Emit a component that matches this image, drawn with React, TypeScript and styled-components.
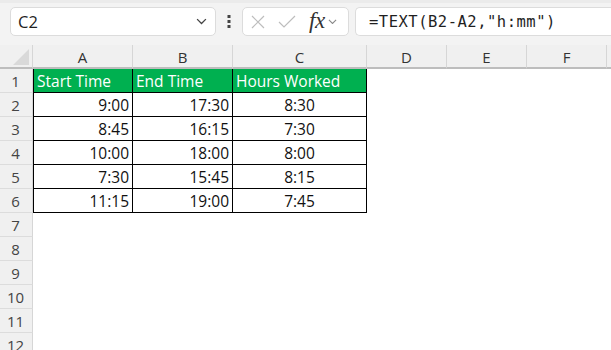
import styled, {createGlobalStyle} from 'styled-components';

const Global = createGlobalStyle`
  html, body {
    margin: 0;
    padding: 0;
    background: #ffffff;
  }
  body {
    width: 611px;
    height: 350px;
    overflow: hidden;
    font-family: "Open Sans", "Liberation Sans", sans-serif;
  }
`;

const Page = styled.div`
  width: 611px;
  height: 350px;
  overflow: hidden;
  background: #fff;
`;

const Toolbar = styled.div`
  display: flex;
  align-items: center;
  box-sizing: border-box;
  height: 45px;
  padding: 4px 0 1px 10px;
  background: #f3f3f3;
  border-top: 3px solid #ebebeb;
  border-bottom: 8px solid #f3f3f3;
`;

const Box = styled.div<{ $width?: number }>`
  display: flex;
  align-items: center;
  height: 29px;
  box-sizing: border-box;
  background: #fff;
  border: 1px solid #dcdcdc;
  border-radius: 5px;
  ${p => p.$width ? `width: ${p.$width}px;` : 'flex: 1;'}
`;

const NameBox = styled(Box)`
  padding: 0 8px 0 7px;
  justify-content: space-between;
  font-size: 16.5px;
  color: #1f1f1f;
`;

const Dots = styled.div`
  width: 26px;
  display: flex;
  justify-content: center;
`;

const ButtonsBox = styled(Box)`
  padding: 0 6px 0 8px;
`;

const FormulaBox = styled(Box)`
  margin-left: 6px;
  border-right: none;
  border-radius: 5px 0 0 5px;
  padding-left: 13px;
  font-family: "DejaVu Sans Mono", "Liberation Mono", monospace;
  font-size: 15.5px;
  letter-spacing: 0.5px;
  color: #1f1f1f;
  white-space: pre;
`;

const Fx = styled.span`
  font-family: "Liberation Serif", serif;
  font-style: italic;
  font-size: 23px;
  line-height: 1;
  color: #333;
  margin: -3px 3px 0 13px;
  letter-spacing: -0.5px;
`;

const Grid = styled.div`
  display: grid;
  grid-template-columns: 33px 100px 100px 134px 80px 80px 80px 1fr;
  grid-auto-rows: 24px;
`;

const Corner = styled.div`
  position: relative;
  background: #f0f0f0;
  border-right: 1px solid #d6d6d6;
  border-bottom: 2px solid #bdbdbd;
  box-sizing: border-box;
`;

const Triangle = styled.div`
  position: absolute;
  right: 3px;
  bottom: 2px;
  width: 0;
  height: 0;
  border-left: 16px solid transparent;
  border-bottom: 16px solid #d9d9d9;
`;

const ColHead = styled.div`
  background: #f0f0f0;
  border-right: 1px solid #d6d6d6;
  border-bottom: 2px solid #bdbdbd;
  box-sizing: border-box;
  display: flex;
  align-items: center;
  justify-content: center;
  font-size: 15px;
  color: #333;
  padding-top: 1px;
`;

const RowHead = styled.div`
  background: #f0f0f0;
  border-right: 1px solid #d6d6d6;
  border-bottom: 1px solid #dcdcdc;
  box-sizing: border-box;
  display: flex;
  align-items: center;
  justify-content: center;
  font-size: 15px;
  color: #444;
  padding-right: 1px;
`;

const Cell = styled.div<{ $align?: string; $head?: boolean; $first?: boolean; $boxed?: boolean }>`
  box-sizing: border-box;
  display: flex;
  align-items: center;
  justify-content: ${p => p.$align === 'right' ? 'flex-end' : p.$align === 'center' ? 'center' : 'flex-start'};
  padding: 0 3px;
  font-size: 15.5px;
  color: ${p => p.$head ? '#fff' : '#111'};
  background: ${p => p.$head ? '#00b050' : '#fff'};
  white-space: nowrap;
  ${p => p.$boxed ? `
    border-right: 1px solid #000;
    border-bottom: 1px solid #000;
  ` : ''}
  ${p => p.$first ? 'border-left: 1px solid #000;' : ''}
`;

const headers = ['Start Time', 'End Time', 'Hours Worked'];
const rows = [
  ['9:00', '17:30', '8:30'],
  ['8:45', '16:15', '7:30'],
  ['10:00', '18:00', '8:00'],
  ['7:30', '15:45', '8:15'],
  ['11:15', '19:00', '7:45'],
];
const cols = ['A', 'B', 'C', 'D', 'E', 'F', ''];

function Chevron({size = 10, color = '#555'}: { size?: number; color?: string }) {
  return (
    <svg width={size} height={size * 0.6} viewBox="0 0 10 6">
      <path d="M1 1 L5 5 L9 1" fill="none" stroke={color} strokeWidth="1.2"/>
    </svg>
  );
}

function App() {
  return (
    <Page>
      <Global/>
      <Toolbar>
        <NameBox $width={206}>
          <span>C2</span>
          <Chevron size={11} color="#444"/>
        </NameBox>
        <Dots>
          <svg width="4" height="13" viewBox="0 0 4 13">
            <rect x="0.5" y="0" width="3" height="3" fill="#444"/>
            <rect x="0.5" y="5" width="3" height="3" fill="#444"/>
            <rect x="0.5" y="10" width="3" height="3" fill="#444"/>
          </svg>
        </Dots>
        <ButtonsBox $width={107}>
          <svg width="14" height="14" viewBox="0 0 14 14">
            <path d="M1 1 L13 13 M13 1 L1 13" stroke="#bdbdbd" strokeWidth="1.2"/>
          </svg>
          <svg width="18" height="14" viewBox="0 0 18 14" style={{marginLeft: 13}}>
            <path d="M1 7 L6 12 L17 1" fill="none" stroke="#bdbdbd" strokeWidth="1.2"/>
          </svg>
          <Fx>fx</Fx>
          <Chevron size={9} color="#888"/>
        </ButtonsBox>
        <FormulaBox>=TEXT(B2-A2,"h:mm")</FormulaBox>
      </Toolbar>
      <Grid>
        <Corner><Triangle/></Corner>
        {cols.map((c, i) => <ColHead key={i}>{c}</ColHead>)}

        <RowHead>1</RowHead>
        {headers.map((h, i) => (
          <Cell key={h} $head $boxed $first={i === 0}>{h}</Cell>
        ))}
        <Cell/><Cell/><Cell/><Cell/>

        {rows.map((r, ri) => [
          <RowHead key={'h' + ri}>{ri + 2}</RowHead>,
          <Cell key={'a' + ri} $align="right" $boxed $first>{r[0]}</Cell>,
          <Cell key={'b' + ri} $align="right" $boxed>{r[1]}</Cell>,
          <Cell key={'c' + ri} $align="center" $boxed>{r[2]}</Cell>,
          <Cell key={'d' + ri}/>, <Cell key={'e' + ri}/>, <Cell key={'f' + ri}/>, <Cell key={'g' + ri}/>,
        ])}

        {[7, 8, 9, 10, 11, 12].map(n => [
          <RowHead key={'r' + n}>{n}</RowHead>,
          ...[0, 1, 2, 3, 4, 5, 6].map(k => <Cell key={n + '-' + k}/>),
        ])}
      </Grid>
    </Page>
  );
}

export default App;
